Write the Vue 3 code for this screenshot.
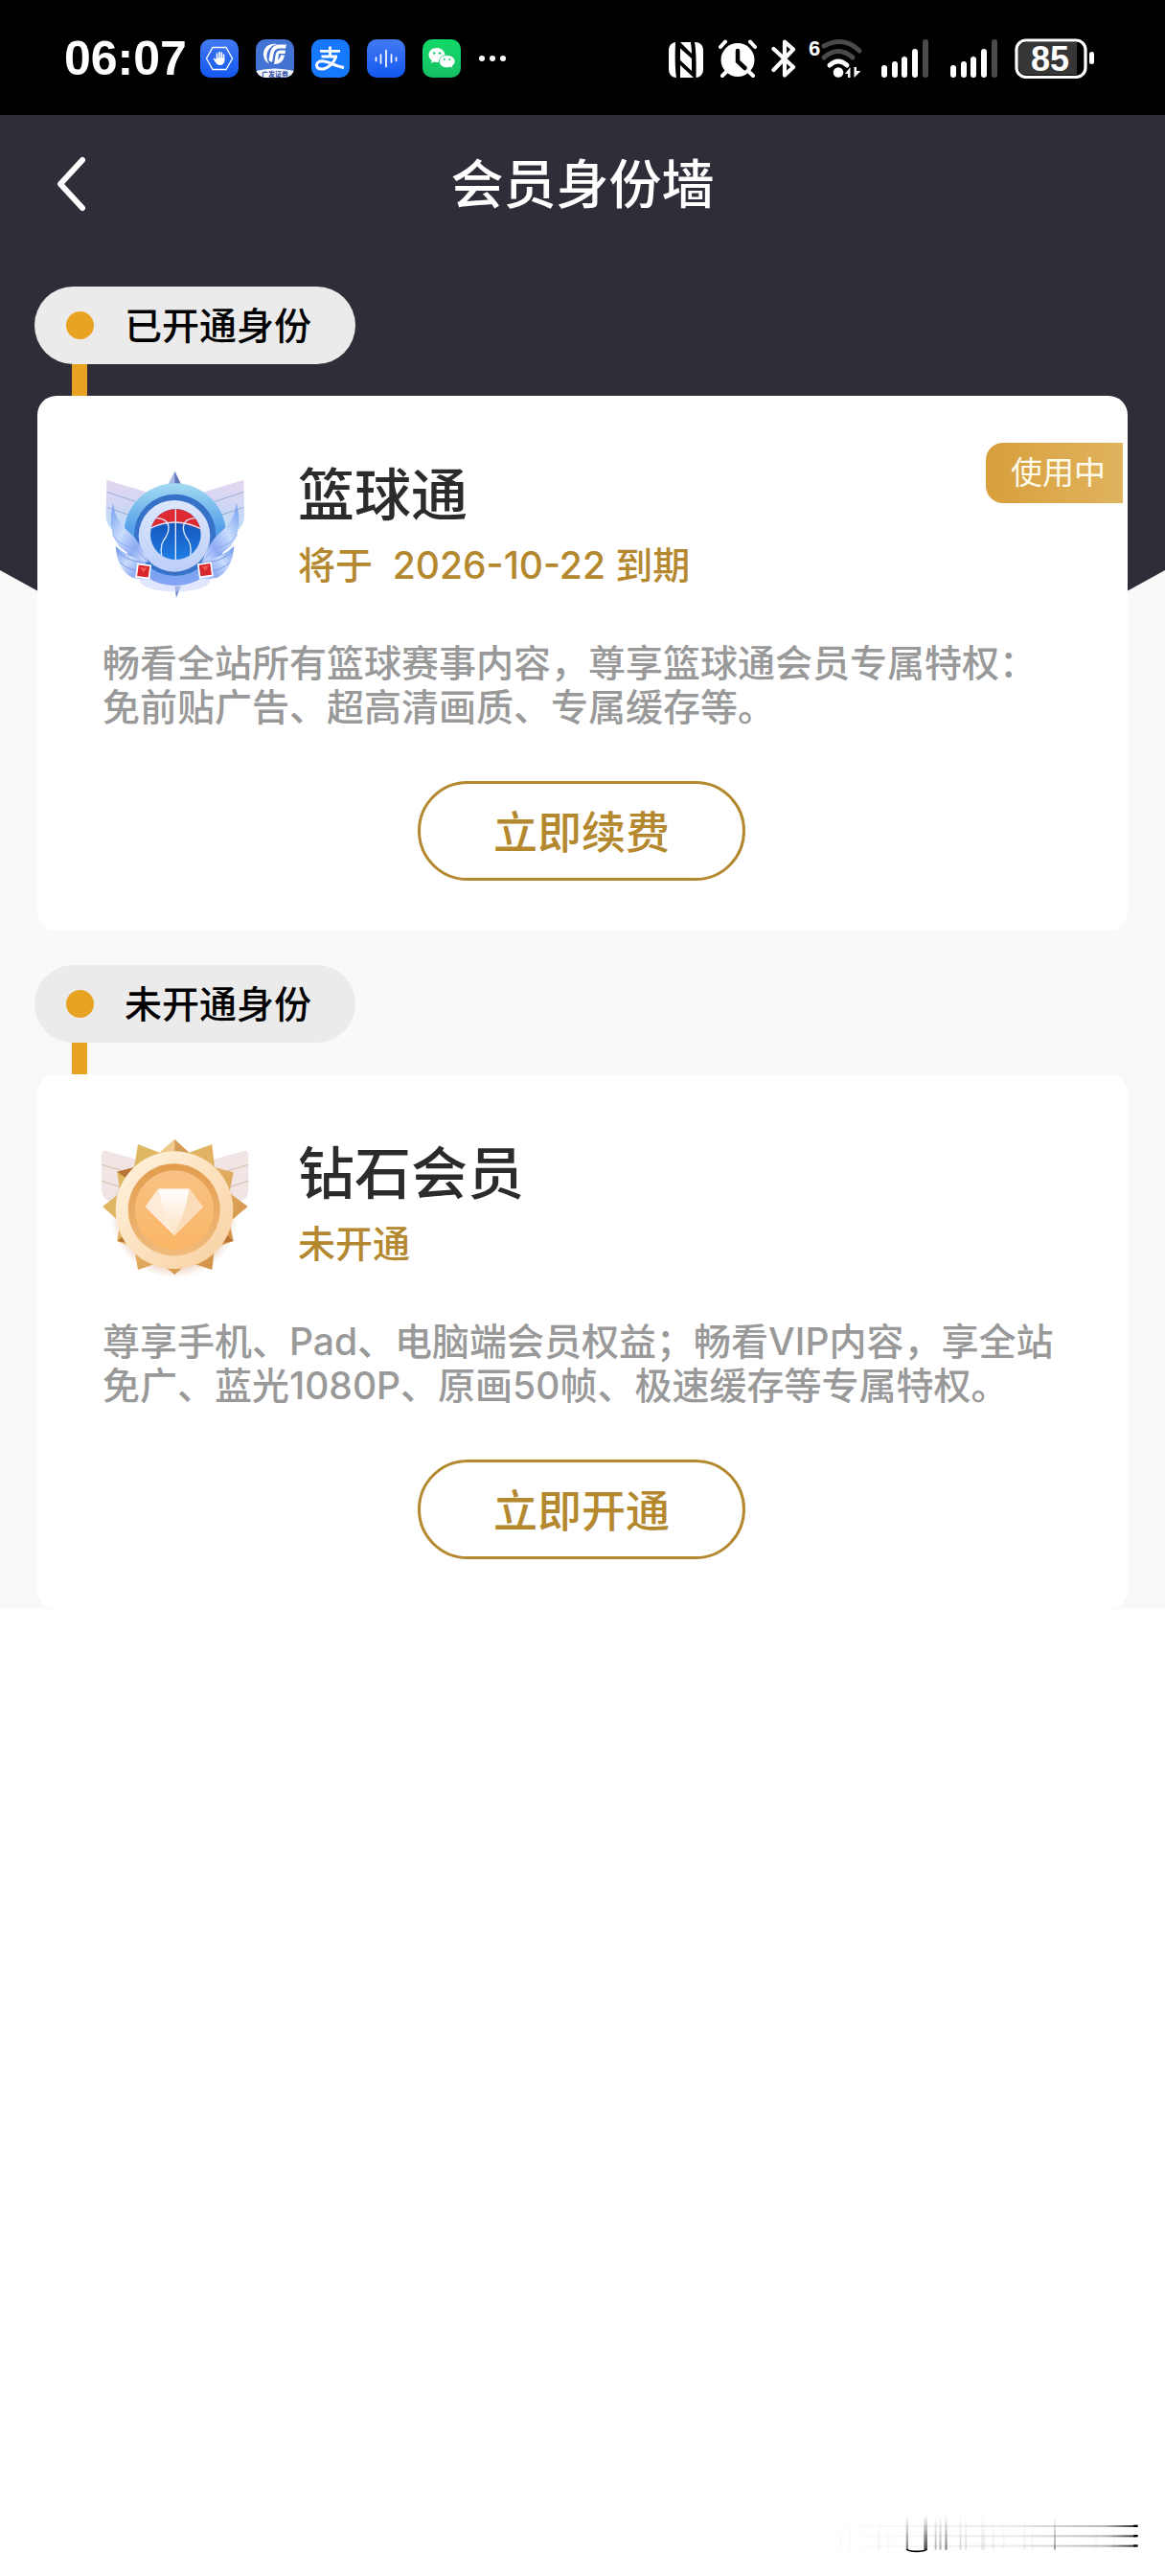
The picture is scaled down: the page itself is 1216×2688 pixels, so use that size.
<template>
  <div class="page">
    <div class="status-bar">
      <div class="status-left">
        <span class="time">06:07</span>
        <div class="apps">
          <svg class="app-icon" viewBox="0 0 40 40">
            <rect width="40" height="40" rx="10" fill="url(#blueApp)" />
            <path d="M13 8.500H27L33.500 20L27 31.500H13L6.500 20Z" fill="none" stroke="#fff" stroke-width="1.300" />
            <path
              d="M17.500 21V15M20 20V13.500M22.300 20V14M24.500 22V16M14.500 20.500L18 25"
              stroke="#fff"
              stroke-width="1.600"
              stroke-linecap="round"
            />
            <path d="M16.700 19.500H25.300V23.500Q24 27 20.500 27Q17.500 27 15.500 23Z" fill="#fff" />
          </svg>
          <svg class="app-icon" viewBox="0 0 40 40">
            <clipPath id="gfClip"><rect width="40" height="40" rx="10" /></clipPath>
            <g clip-path="url(#gfClip)">
              <rect width="40" height="40" fill="#4373d3" />
              <path d="M0 33Q20 28 40 33V40H0Z" fill="#f2f5fc" />
              <path
                d="M22 5C13 4 8 9 8 15.500C8 20 10 23.500 14 25.500C11 21 10.500 16 13 11.500C15 8 18 6 22 5Z"
                fill="#fff"
              />
              <path
                d="M32 5.500H24C18 6 15.500 10 14.500 16L13.500 22L17 24L18.500 15.500C19 12 21 9.500 25 9.500H31Z"
                fill="#fff"
              />
              <path d="M31 11.500H25C22 12 21 14 20.500 17L19 26C25 26 29 23 30 16.500H26C25.500 19 24.500 20.500 23 21.500L24 15H30.500Z" fill="#fff" />
              <text x="20" y="38.500" font-size="7" font-weight="700" text-anchor="middle" fill="#2b4ba8">广发证券</text>
            </g>
          </svg>
          <svg class="app-icon" viewBox="0 0 40 40">
            <rect width="40" height="40" rx="10" fill="#1677ff" />
            <!-- brand mark with the long looping tail -->
            <g fill="none" stroke="#fff">
              <path d="M9 12.300H30M19.500 7.500V18M10.500 18H27" stroke-width="2.800" />
              <path
                d="M26 17.500C24 24 17.500 31 11 31C7.500 31 5.500 29.500 5.500 27C5.500 24.500 8 22.800 11.500 22.800C17 22.800 24 27.500 34 29.500"
                stroke-width="3"
              />
            </g>
          </svg>
          <svg class="app-icon" viewBox="0 0 40 40">
            <rect width="40" height="40" rx="10" fill="url(#blueApp)" />
            <path
              d="M9.500 19V22.500M14.500 16V25M20 11.500V28.500M25.500 16V24M30.500 19V22.500"
              stroke="#fff"
              stroke-width="1.700"
              stroke-linecap="round"
            />
          </svg>
          <svg class="app-icon" viewBox="0 0 40 40">
            <rect width="40" height="40" rx="10" fill="url(#greenApp)" />
            <path d="M15 9C10 9 6.500 12 6.500 16.500C6.500 19 8 21 9.800 22.300L9 25L12 23.500Q18 25 21 22Q24 18 23.500 15.500C22.500 11.500 19 9 15 9Z" fill="#fff" />
            <path
              d="M25.500 16.500C20.500 16.500 17.500 19.500 17.500 23C17.500 27 21 29.700 25.500 29.700Q27.500 29.700 29 29L31.500 30.500L31 28C33 26.700 34 25 34 23C34 19.500 30.500 16.500 25.500 16.500Z"
              fill="#fff"
              stroke="#14c866"
              stroke-width="0.800"
            />
            <g fill="#14c866">
              <circle cx="12.200" cy="14.500" r="1.200" />
              <circle cx="18" cy="14.500" r="1.200" />
              <circle cx="22.800" cy="21" r="1" />
              <circle cx="28.300" cy="21" r="1" />
            </g>
          </svg>
          <svg class="more" viewBox="0 0 30 40" fill="#fff">
            <circle cx="4" cy="20" r="3" />
            <circle cx="15" cy="20" r="3" />
            <circle cx="26" cy="20" r="3" />
          </svg>
        </div>
      </div>

      <div class="status-right">
        <!-- NFC -->
        <svg width="38" height="42" viewBox="0 0 38 42">
          <rect x="1" y="4" width="36" height="37" rx="8" fill="#fff" />
          <path d="M8 4H13L26 17V22L13 10.500V41H9Q7 30 8 4Z" fill="#000" />
          <path d="M12 22L25 34V18Q25 10 24 4H28Q30 14 29.500 41H27L12 27Z" fill="#000" />
        </svg>
        <!-- alarm -->
        <svg width="42" height="42" viewBox="0 0 42 42">
          <circle cx="21" cy="22.500" r="17.500" fill="#fff" />
          <path
            d="M3 9L8 3.500M34 3.500L39 9M5 39L10 34M37 39L32 34"
            stroke="#fff"
            stroke-width="4"
            stroke-linecap="round"
          />
          <path d="M21 13V24L28.500 31" fill="none" stroke="#000" stroke-width="4.500" stroke-linecap="round" />
        </svg>
        <!-- bluetooth -->
        <svg width="26" height="42" viewBox="0 0 26 42">
          <path
            d="M2.500 11L23 30L14 38.500V3.500L23 11.500L2.500 33"
            fill="none"
            stroke="#fff"
            stroke-width="4.200"
            stroke-linecap="round"
            stroke-linejoin="round"
          />
        </svg>
        <!-- wifi 6 -->
        <svg class="wifi" width="56" height="42" viewBox="0 0 56 42">
          <text class="latin-bold" x="-1" y="18" font-size="22" fill="#fff">6</text>
          <g fill="none" stroke-linecap="round" stroke-width="5">
            <path d="M15 8Q36 -3 52 13" stroke="#4a4a4a" />
            <path d="M15 20Q30 7 45 20" stroke="#4a4a4a" />
            <path d="M21 28Q30 20 39 28" stroke="#fff" />
          </g>
          <circle cx="30" cy="35.500" r="5.300" fill="#fff" />
          <path d="M37 37L42.500 30V41H40V37ZM46.500 30H49V34H53.500L46.500 41Z" fill="#fff" />
        </svg>
        <svg v-for="n in 2" :key="n" class="signal" width="50" height="42" viewBox="0 0 50 42">
          <rect
            v-for="(bar, i) in bars"
            :key="i"
            :x="bar.x"
            :y="bar.y"
            width="6"
            :height="41 - bar.y"
            rx="3"
            :fill="i === 4 ? '#4a4a4a' : '#fff'"
          />
        </svg>
        <!-- battery -->
        <svg width="84" height="42" viewBox="0 0 84 42">
          <path d="M13 4H65V38H13Q4 38 4 28V14Q4 4 13 4Z" fill="#363636" />
          <rect x="2" y="2" width="72" height="38.500" rx="10" fill="none" stroke="#fff" stroke-width="3.200" />
          <rect x="78" y="14" width="5" height="13" rx="2.500" fill="#fff" />
          <text class="latin-bold" x="37" y="34" font-size="36" text-anchor="middle" fill="#fff">85</text>
        </svg>
      </div>
    </div>

    <main class="content">
      <header class="nav">
        <button class="back" type="button" aria-label="返回">
          <svg width="34" height="60" viewBox="0 0 34 60">
            <path
              d="M28 5L5 30L28 55"
              fill="none"
              stroke="#fff"
              stroke-width="6"
              stroke-linecap="round"
              stroke-linejoin="round"
            />
          </svg>
        </button>
        <h1>会员身份墙</h1>
      </header>

      <section v-for="item in identities" :key="item.key" class="group">
        <div class="pill">
          <i class="dot"></i>
          <span>{{ item.group }}</span>
        </div>
        <div class="link-line"></div>

        <article class="card">
          <span v-if="item.active" class="badge">使用中</span>
          <div class="card-head">
            <!-- basketball medal -->
            <svg v-if="item.key === 'basketball'" class="medal" viewBox="57 15 456 456">
              <defs>
                <linearGradient id="wingBlue" x1="0" y1="0" x2="0" y2="1">
                  <stop offset="0" stop-color="#e6d6f1" />
                  <stop offset="0.500" stop-color="#c8d7f5" />
                  <stop offset="1" stop-color="#b4e6fa" />
                </linearGradient>
                <linearGradient id="discBlue" x1="0" y1="0" x2="0" y2="1">
                  <stop offset="0" stop-color="#a4dbf2" />
                  <stop offset="0.450" stop-color="#559fe9" />
                  <stop offset="1" stop-color="#86a4f4" />
                </linearGradient>
                <linearGradient id="ribbon" x1="0" y1="0" x2="1" y2="1">
                  <stop offset="0" stop-color="#6f9bee" />
                  <stop offset="0.400" stop-color="#c9dcfc" />
                  <stop offset="0.700" stop-color="#8fabf3" />
                  <stop offset="1" stop-color="#dde9ff" />
                </linearGradient>
                <linearGradient id="innerBlue" x1="0" y1="0" x2="0" y2="1">
                  <stop offset="0" stop-color="#dde7fb" />
                  <stop offset="1" stop-color="#bccffa" />
                </linearGradient>
                <linearGradient id="ballBlue" x1="0" y1="0" x2="0" y2="1">
                  <stop offset="0" stop-color="#1148ad" />
                  <stop offset="1" stop-color="#1f7fe6" />
                </linearGradient>
                <clipPath id="ballClip"><circle cx="286" cy="263" r="79" /></clipPath>
                <g id="blueWing">
                  <path d="M70 92L200 132L170 300L92 252Q68 236 68 205Z" fill="url(#wingBlue)" />
                  <path d="M70 130L160 160M70 178L140 202" stroke="#8ea3cf" stroke-width="2.500" />
                </g>
                <g id="blueRibbon">
                  <path d="M98 300Q104 375 150 398Q178 406 208 404L190 345Q130 330 98 300Z" fill="url(#ribbon)" />
                  <path d="M112 350Q135 375 172 376M100 312Q130 345 178 350" fill="none" stroke="#7d99e6" stroke-width="3" />
                  <path
                    d="M90 165Q98 222 138 254Q178 286 200 352Q150 336 108 300Q78 258 84 200Z"
                    fill="url(#ribbon)"
                  />
                  <path d="M88 262Q105 295 150 305Q178 316 196 350" fill="none" stroke="#8ba9ee" stroke-width="3" />
                </g>
              </defs>
              <use href="#blueWing" />
              <use href="#blueWing" transform="translate(569 0) scale(-1 1)" />
              <path d="M283 65L304 108H262Z" fill="#a9bbe9" />
              <path d="M283 65L304 108H283Z" fill="#6478bd" />
              <path d="M283 425H302L288 461Z" fill="#7088cf" />
              <ellipse cx="284" cy="408" rx="110" ry="34" fill="#c9d6fc" opacity="0.600" />
              <circle cx="284" cy="263" r="160" fill="url(#discBlue)" />
              <circle cx="284" cy="265" r="128" fill="#3672c8" />
              <circle cx="282" cy="268" r="112" fill="url(#innerBlue)" />
              <g clip-path="url(#ballClip)">
                <rect x="200" y="180" width="180" height="170" fill="url(#ballBlue)" />
                <path d="M200 180H380V256Q286 204 200 246Z" fill="#e02a31" />
                <g fill="none" stroke="#dfe9fc" stroke-width="4">
                  <path d="M286 180V345" />
                  <path d="M204 245Q286 204 368 247" />
                  <path d="M226 212Q262 214 264 240Q264 262 248 282Q234 304 246 345" />
                  <path d="M346 212Q312 214 310 240Q310 262 326 282Q340 304 328 345" />
                </g>
              </g>
              <use href="#blueRibbon" />
              <use href="#blueRibbon" transform="translate(567 0) scale(-1 1)" />
              <g stroke="#fff" stroke-width="5">
                <rect x="165" y="358" width="40" height="40" fill="#d8262f" transform="rotate(8 185 378)" />
                <rect x="359" y="354" width="40" height="40" fill="#d8262f" transform="rotate(-8 379 374)" />
              </g>
              <path d="M174 366L198 368L185 382ZM367 364L390 360L380 377Z" fill="#f0584c" />
            </svg>

            <!-- diamond medal -->
            <svg v-else class="medal" viewBox="57 39 456 456">
              <defs>
                <linearGradient id="starGold" x1="0" y1="0" x2="1" y2="1">
                  <stop offset="0" stop-color="#dcbd62" />
                  <stop offset="0.500" stop-color="#e3b063" />
                  <stop offset="1" stop-color="#cb8740" />
                </linearGradient>
                <linearGradient id="rimGold" x1="0" y1="0" x2="1" y2="1">
                  <stop offset="0" stop-color="#fff4e0" />
                  <stop offset="1" stop-color="#f9cf9f" />
                </linearGradient>
                <linearGradient id="ringGold" x1="0" y1="0" x2="0" y2="1">
                  <stop offset="0" stop-color="#e39c4d" />
                  <stop offset="1" stop-color="#f0bb7c" />
                </linearGradient>
                <linearGradient id="discGold" x1="0" y1="0" x2="0" y2="1">
                  <stop offset="0" stop-color="#f8c285" />
                  <stop offset="1" stop-color="#fab565" />
                </linearGradient>
                <linearGradient id="gem" x1="0" y1="0" x2="0" y2="1">
                  <stop offset="0" stop-color="#fff" />
                  <stop offset="1" stop-color="#fde0c0" />
                </linearGradient>
                <radialGradient id="medalShade">
                  <stop offset="0.750" stop-color="#c98a5a" stop-opacity="0.450" />
                  <stop offset="1" stop-color="#c98a5a" stop-opacity="0" />
                </radialGradient>
                <g id="goldWing">
                  <path d="M54 106Q54 88 72 94L200 130L160 300L80 252Q54 240 54 215Z" fill="#f0e4e4" />
                  <path d="M54 136L130 158M54 187L120 208" stroke="#cdb39c" stroke-width="2.500" />
                </g>
              </defs>
              <use href="#goldWing" />
              <use href="#goldWing" transform="translate(568 0) scale(-1 1)" />
              <circle cx="282" cy="292" r="200" fill="url(#medalShade)" />
              <path
                d="M283 57L328 98L400 72L408 144L467 160L454 224L512 267L454 316L467 375L408 396L400 465L328 442L283 480L236 442L168 465L156 396L103 375L112 316L57 267L112 224L103 158L156 144L168 72L236 98Z"
                fill="url(#starGold)"
              />
              <path d="M283 57L328 98H283Z" fill="#d39a58" />
              <path d="M283 57L236 98H283Z" fill="#f0c98c" />
              <path d="M103 158L156 144L130 178ZM467 375L430 380L440 350ZM103 375L140 382L128 355Z" fill="#b87435" />
              <circle cx="282" cy="278" r="184" fill="url(#rimGold)" />
              <circle cx="281" cy="277" r="144" fill="url(#ringGold)" />
              <circle cx="282" cy="278" r="124" fill="url(#discGold)" />
              <path
                d="M232 212H328L370 268L282 357L192 268Z"
                fill="url(#gem)"
                stroke="#fde6cb"
                stroke-width="3"
                stroke-linejoin="round"
              />
              <path d="M232 212L192 268L282 357L246 268Z" fill="#fdebd8" />
              <path d="M328 212L370 268L282 357L318 268Z" fill="#fbdcb9" />
            </svg>

            <div class="card-title">
              <h2>{{ item.name }}</h2>
              <p class="state">{{ item.state }}</p>
            </div>
          </div>
          <p class="desc">{{ item.desc }}</p>
          <button class="action" type="button">{{ item.action }}</button>
        </article>
      </section>
    </main>

    <!-- faded streaks in the bottom corner -->
    <footer class="streaks">
      <svg width="376" height="88" viewBox="0 0 1128 264">
        <defs>
          <linearGradient id="fadeRight" x1="0" y1="0" x2="1" y2="0">
            <stop offset="0" stop-color="#000" stop-opacity="0" />
            <stop offset="0.600" stop-color="#000" stop-opacity="0.080" />
            <stop offset="0.900" stop-color="#000" stop-opacity="0.280" />
            <stop offset="1" stop-color="#000" stop-opacity="0.800" />
          </linearGradient>
          <linearGradient id="fadeDown" x1="0" y1="0" x2="0" y2="1">
            <stop offset="0" stop-color="#000" stop-opacity="0" />
            <stop offset="1" stop-color="#000" stop-opacity="0.700" />
          </linearGradient>
        </defs>
        <g v-for="y in [108, 139, 170]" :key="y">
          <rect x="100" :y="y - 3" width="935" height="6" fill="url(#fadeRight)" />
          <rect x="1030" :y="y - 4" width="13" height="7" fill="#000" />
        </g>
        <rect
          v-for="s in streaks"
          :key="s.x"
          :x="s.x"
          y="74"
          :width="s.w"
          height="108"
          fill="url(#fadeDown)"
          :opacity="s.o"
        />
        <path d="M319 180Q326 187 350 187Q375 187 382 180" fill="none" stroke="#000" stroke-width="5" />
      </svg>
    </footer>

    <svg class="defs" width="0" height="0" aria-hidden="true">
      <linearGradient id="blueApp" x1="0" y1="0" x2="0" y2="1">
        <stop offset="0" stop-color="#4379f2" />
        <stop offset="1" stop-color="#1258f0" />
      </linearGradient>
      <linearGradient id="greenApp" x1="0" y1="0" x2="0" y2="1">
        <stop offset="0" stop-color="#12d868" />
        <stop offset="1" stop-color="#16c065" />
      </linearGradient>
    </svg>
  </div>
</template>

<script setup>
const bars = [
  { x: 1, y: 28 },
  { x: 12, y: 24 },
  { x: 22, y: 19 },
  { x: 33, y: 11 },
  { x: 44, y: 1 }
]

const streaks = [
  { x: 110, w: 5, o: 0.04 },
  { x: 140, w: 4, o: 0.04 },
  { x: 228, w: 8, o: 0.06 },
  { x: 260, w: 6, o: 0.04 },
  { x: 317, w: 7, o: 0.7 },
  { x: 373, w: 11, o: 1 },
  { x: 407, w: 6, o: 0.4 },
  { x: 421, w: 7, o: 0.4 },
  { x: 439, w: 7, o: 0.7 },
  { x: 485, w: 5, o: 0.25 },
  { x: 502, w: 5, o: 0.2 },
  { x: 552, w: 13, o: 0.12 },
  { x: 586, w: 8, o: 0.08 },
  { x: 620, w: 6, o: 0.06 },
  { x: 685, w: 7, o: 0.08 },
  { x: 710, w: 5, o: 0.06 },
  { x: 780, w: 6, o: 0.5 },
  { x: 910, w: 6, o: 0.05 },
  { x: 965, w: 6, o: 0.05 }
]

const identities = [
  {
    key: 'basketball',
    group: '已开通身份',
    name: '篮球通',
    active: true,
    state: '将于\u00a0 2026-10-22 到期',
    desc: '畅看全站所有篮球赛事内容，尊享篮球通会员专属特权：免前贴广告、超高清画质、专属缓存等。',
    action: '立即续费'
  },
  {
    key: 'diamond',
    group: '未开通身份',
    name: '钻石会员',
    active: false,
    state: '未开通',
    desc: '尊享手机、Pad、电脑端会员权益；畅看VIP内容，享全站免广、蓝光1080P、原画50帧、极速缓存等专属特权。',
    action: '立即开通'
  }
]
</script>

<style>
body {
  margin: 0;
  background: #fff;
}
</style>

<style scoped>
.page {
  display: flex;
  flex-direction: column;
  min-height: 100vh;
  font-family: Inter, "Noto Sans CJK SC", sans-serif;
}

h1,
h2,
p {
  margin: 0;
}

button {
  font-family: inherit;
  cursor: pointer;
}

svg {
  display: block;
  flex: none;
}

.defs {
  position: absolute;
}

.latin-bold {
  font-family: "Liberation Sans", sans-serif;
  font-weight: 700;
}

/* status bar */
.status-bar {
  display: flex;
  justify-content: space-between;
  align-items: center;
  height: 120px;
  padding: 2px 73px 0 67px;
  box-sizing: border-box;
  background: #000;
}

.status-left,
.status-right,
.apps {
  display: flex;
  align-items: center;
}

.status-left {
  gap: 14px;
}

.apps {
  gap: 18px;
}

.status-right {
  gap: 14px;
}

.time {
  color: #fff;
  font: 700 50px/60px "Liberation Sans", sans-serif;
}

.app-icon {
  width: 40px;
  height: 40px;
}

.more {
  width: 30px;
  height: 40px;
}

.wifi {
  overflow: visible;
}

.signal {
  margin: 0 4px;
}

/* content */
.content {
  position: relative;
  z-index: 0;
  background: #f9f9f9;
}

.content::before {
  content: "";
  position: absolute;
  inset: 0 0 auto;
  z-index: -1;
  height: 810px;
  background: #2f2d38;
  clip-path: polygon(0 0, 100% 0, 100% 475px, 50% 810px, 0 475px);
}

.nav {
  display: grid;
  grid-template-columns: 1fr auto 1fr;
  align-items: center;
  height: 144px;
  padding: 0 58px;
}

.nav h1 {
  color: #fff;
  font-size: 55px;
  font-weight: 500;
  line-height: 80px;
}

.back {
  justify-self: start;
  padding: 0;
  border: 0;
  background: none;
}

.group {
  padding: 35px 39px 0;
}

.group + .group {
  padding-top: 36px;
}

.pill {
  display: inline-flex;
  align-items: center;
  gap: 32px;
  height: 81px;
  margin-left: -3px;
  padding: 0 46px 0 33px;
  box-sizing: border-box;
  border-radius: 41px;
  background: #ebebeb;
  color: #000;
  font-size: 39px;
  font-weight: 500;
  line-height: 46px;
  vertical-align: top;
}

.dot {
  width: 29px;
  height: 29px;
  border-radius: 50%;
  background: #e8a323;
}

.link-line {
  width: 16px;
  height: 33px;
  margin-left: 36px;
  background: #e8a323;
}

.card {
  position: relative;
  padding: 62px 70px 52px 68px;
  border-radius: 20px;
  background: #fff;
}

.badge {
  position: absolute;
  top: 49px;
  right: 5px;
  padding: 0 18px 0 26px;
  border-radius: 18px 0 0 18px;
  background: linear-gradient(90deg, #d89f3b, #e0b35f);
  color: #fffbec;
  font-size: 33px;
  line-height: 63px;
}

.card-head {
  display: flex;
  gap: 52px;
}

.medal {
  width: 152px;
  height: 152px;
  overflow: visible;
}

.card-title h2 {
  color: #2b2b2b;
  font-size: 59px;
  font-weight: 500;
  line-height: 84px;
}

.state {
  margin-top: 8px;
  color: #b4882f;
  font-size: 39px;
  font-weight: 500;
  line-height: 46px;
}

.desc {
  margin-top: 42px;
  color: #999;
  font-size: 39px;
  font-weight: 500;
  line-height: 46px;
}

.action {
  display: block;
  min-width: 341px;
  height: 104px;
  margin: 54px auto 0;
  padding: 0 76px 4px;
  border: 3px solid #b4882f;
  border-radius: 52px;
  background: #fff;
  color: #b4882f;
  font-size: 46px;
  font-weight: 500;
}

.streaks {
  display: flex;
  justify-content: flex-end;
  margin-top: auto;
}
</style>
